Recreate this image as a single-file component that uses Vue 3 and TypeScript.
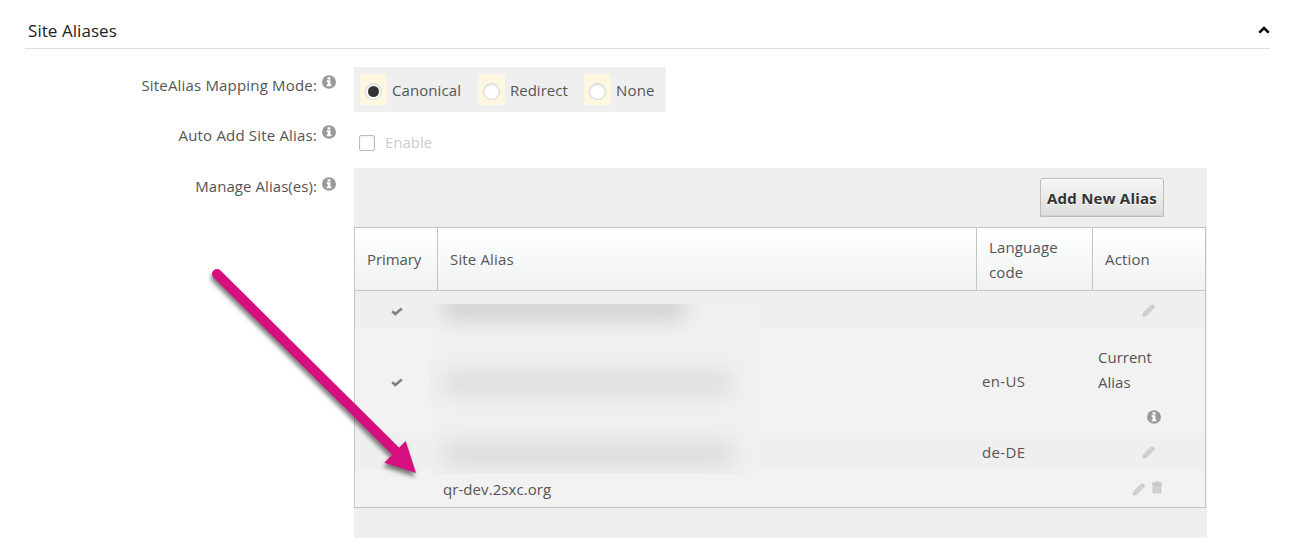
<script setup lang="ts">
interface AliasRow {
  id: number
  primary: boolean
  name: string
  language: string
  current: boolean
  removable: boolean
}

const modes: { label: string; key: string; active: boolean }[] = [
  { label: 'Canonical', key: 'canonical', active: true },
  { label: 'Redirect', key: 'redirect', active: false },
  { label: 'None', key: 'none', active: false },
]

const aliases: AliasRow[] = [
  { id: 1, primary: true, name: '', language: '', current: false, removable: false },
  { id: 2, primary: true, name: '', language: 'en-US', current: true, removable: false },
  { id: 3, primary: false, name: '', language: 'de-DE', current: false, removable: false },
  { id: 4, primary: false, name: 'qr-dev.2sxc.org', language: '', current: false, removable: true },
]
</script>

<template>
  <svg class="defs" width="0" height="0" aria-hidden="true">
    <symbol id="info" viewBox="0 0 14 14">
      <ellipse cx="7" cy="7" rx="7" ry="6.7" fill="#999" />
      <path d="M5.6 2.2h2.8v2.2H5.6zM4.7 5.3h3.7v4.3h1v1.7H4.7V9.6h1V6.9h-1z" fill="#fff" />
    </symbol>
    <symbol id="pencil" viewBox="0 0 13 13">
      <path d="M.5 12.5 1 8.8 8.5 1.2Q10.3-.2 12 1.1T11.9 4.5L4.3 12Z" fill="#cbcbcb" />
      <path d="M2.5 9.3 8.9 2.9M3.7 10.5 10.1 4.1M8.1 2l2.9 2.9" stroke="#e2e2e2" stroke-width=".6" fill="none" />
    </symbol>
    <symbol id="trash" viewBox="0 0 10 13">
      <path d="M3 .2h4v1.3h3v2H0v-2h3zM4 1v.5h2V1zM.7 3.5h8.6v8.8H.7z" fill="#c8c8c8" fill-rule="evenodd" />
      <path d="M3 5v6M5 5v6M7 5v6" stroke="#dedede" stroke-width=".8" />
    </symbol>
    <symbol id="check" viewBox="0 0 12 9">
      <path d="M1.2 4.3 4.3 7 10.8 1.5" fill="none" stroke="#808080" stroke-width="2.7" />
    </symbol>
  </svg>
  <main class="page">
    <header class="section">
      <h2>Site Aliases</h2>
      <svg class="chevron" width="12" height="8" viewBox="0 0 12 8"><path d="M1.3 6.6 6 2l4.7 4.6" fill="none" stroke="#000" stroke-width="2.6" /></svg>
    </header>

    <div class="field mode">
      <label class="caption"><span class="t-mode">SiteAlias Mapping Mode:</span><svg class="info"><use href="#info" /></svg></label>
      <div class="modes">
        <div v-for="m in modes" :key="m.key" class="option" :class="m.key">
          <span class="swatch"><span class="radio" :class="{ active: m.active }" /></span>
          <span class="text">{{ m.label }}</span>
        </div>
      </div>
    </div>

    <div class="field auto">
      <label class="caption"><span class="t-auto">Auto Add Site Alias:</span><svg class="info"><use href="#info" /></svg></label>
      <div class="enable"><span class="box" /><span class="t-enable">Enable</span></div>
    </div>

    <div class="field manage">
      <label class="caption"><span class="t-manage">Manage Alias(es):</span><svg class="info"><use href="#info" /></svg></label>
      <section class="panel">
        <div class="toolbar"><button type="button"><span>Add New Alias</span></button></div>
        <div class="table">
          <div class="head">
            <div><span class="t-primary">Primary</span></div>
            <div><span class="t-site">Site Alias</span></div>
            <div><span class="t-lang">Language<br />code</span></div>
            <div><span class="t-action">Action</span></div>
          </div>
          <div v-for="a in aliases" :key="a.id" class="row" :class="{ tall: a.current }">
            <div class="primary"><svg v-if="a.primary" width="12" height="9"><use href="#check" /></svg></div>
            <div class="name"><span>{{ a.name }}</span></div>
            <div class="lang"><span>{{ a.language }}</span></div>
            <div v-if="a.current" class="current"><span class="t-current">Current<br />Alias</span><svg class="info"><use href="#info" /></svg></div>
            <div v-else class="actions" :class="{ double: a.removable }">
              <svg class="pencil" width="13" height="13"><use href="#pencil" /></svg>
              <svg v-if="a.removable" class="trash" width="10" height="13"><use href="#trash" /></svg>
            </div>
          </div>
          <div class="redaction"><i class="first" /><i class="second" /><i class="third" /></div>
        </div>
      </section>
    </div>

    <svg class="arrow" width="240" height="240" viewBox="0 0 240 240">
      <path d="M27 24 209 204.5" stroke="#d60f7e" stroke-width="10" stroke-linecap="round" />
      <path d="M226 223 194.3 212.7 215.7 191Z" fill="#d60f7e" />
    </svg>
  </main>
</template>

<style>
body { margin: 0; background: #fff; }
</style>

<style scoped>
* { box-sizing: border-box; }
.defs { position: absolute; }
.page { position: relative; width: 1302px; height: 557px; overflow: hidden; background: #fff; color: #555; font: 15px/25px "Open Sans", "Noto Sans", sans-serif; }
span { white-space: nowrap; }
.section { display: flex; justify-content: space-between; height: 49px; margin: 0 32px 0 25px; padding: 18px 0 0 3px; border-bottom: 1px solid #ddd; color: #222; }
h2 { margin: 0; font-size: 17px; line-height: 25px; font-weight: 400; letter-spacing: .06px; }
.chevron { margin-top: 8px; }
.field { display: flex; }
.caption { display: flex; justify-content: flex-end; width: 336px; margin-right: 18px; flex: none; }
.info { width: 14px; height: 14px; margin-left: 5px; flex: none; }
.t-mode, .t-auto { letter-spacing: .18px; }
.t-manage { letter-spacing: .06px; }
.mode { height: 45px; margin-top: 18px; }
.mode .caption { padding-top: 6px; }
.mode .info { margin-top: 2px; }
.modes { display: flex; width: 312px; height: 45px; padding: 7px 0 0 6px; background: #efefef; }
.option { display: flex; height: 31px; }
.canonical { width: 118px; }
.canonical .text { letter-spacing: .08px; }
.redirect { width: 106px; }
.none .text { letter-spacing: .2px; }
.swatch { width: 27px; height: 31px; padding: 9px 0 0 5px; background: #fdf7e2; }
.radio { display: flex; width: 17px; height: 17px; border: 1px solid #d4d4d4; border-radius: 50%; background: #fff; box-shadow: inset 0 1px 2px #ddd; }
.radio.active { align-items: center; justify-content: center; }
.radio.active::after { content: ""; width: 11px; height: 11px; border-radius: 50%; background: #333; }
.text { margin: 4px 0 0 5px; }
.auto { height: 38px; margin-top: 11px; }
.auto .caption .info { margin-top: 2px; }
.enable { display: flex; padding: 7px 0 0 5px; color: #ccc; }
.box { width: 16px; height: 16px; margin: 5px 10px 0 0; border: 1px solid #bbb; border-radius: 2px; background: #fff; box-shadow: inset 0 1px 3px #eee; }
.manage { margin-top: 7px; }
.manage > .caption { padding-top: 6px; }
.manage > .caption .info { margin-top: 3px; }
.panel { width: 853px; height: 370px; background: #efefef; }
.toolbar { display: flex; justify-content: flex-end; height: 59px; padding: 10px 43px 0 0; }
button { width: 124px; height: 39px; padding: 2px 0 0; border: 1px solid #bbb; border-radius: 3px 3px 1px 1px; background: linear-gradient(#f6f6f6, #ddd); box-shadow: inset 0 1px #fff, inset 0 -1px #d2d2d2; color: #333; font: 700 15px/25px "Open Sans", sans-serif; letter-spacing: .22px; text-shadow: 0 1px #fff; }
.table { position: relative; width: 852px; height: 281px; border: 1px solid #c4c4c4; }
.head { display: grid; grid-template-columns: 82px 539px 116px 1fr; height: 63px; border-bottom: 1px solid #c4c4c4; background: linear-gradient(#fff, #f0f2f2); }
.head > div { display: flex; align-items: center; padding: 0 0 0 12px; border-left: 1px solid #c4c4c4; }
.head > div:nth-child(3) { padding-top: 2px; }
.head > div:first-child { border-left: 0; }
.t-primary { letter-spacing: -.1px; }
.t-site { letter-spacing: .15px; }
.t-lang, .t-action { letter-spacing: .15px; }
.row { display: grid; grid-template-columns: 82px 539px 116px 1fr; height: 37px; background: #efefef; }
.row:nth-child(odd) { background: #f2f2f2; }
.row.tall { height: 105px; }
.primary { padding: 16px 0 0 36px; }
.tall .primary { padding-top: 50px; }
.primary svg, .actions svg { display: block; }
.name { padding: 7px 0 0 6px; letter-spacing: .07px; }
.lang { padding: 7px 0 0 6px; letter-spacing: .35px; }
.tall .lang { padding-top: 41px; }
.current { display: flex; flex-direction: column; padding: 17px 0 0 6px; }
.current .info { margin: 15px 0 0 49px; }
.actions { display: flex; padding: 13px 0 0 50px; }
.actions.double { padding-left: 40px; }
.trash { margin: -2px 0 0 7px; }
.redaction { position: absolute; left: 75px; top: 76px; width: 330px; height: 170px; overflow: hidden; background: #f1f1f1; }
.redaction i { position: absolute; left: 13px; filter: blur(11px); }
.first { top: -6px; width: 242px; height: 20px; background: #c8c8c8; }
.second { top: 67px; width: 288px; height: 24px; background: #dcdcdc; }
.third { top: 138px; width: 290px; height: 24px; background: #dadada; }
.arrow { position: absolute; left: 190px; top: 250px; filter: drop-shadow(-1px 4px 2px rgba(0, 0, 0, .5)); }
</style>
